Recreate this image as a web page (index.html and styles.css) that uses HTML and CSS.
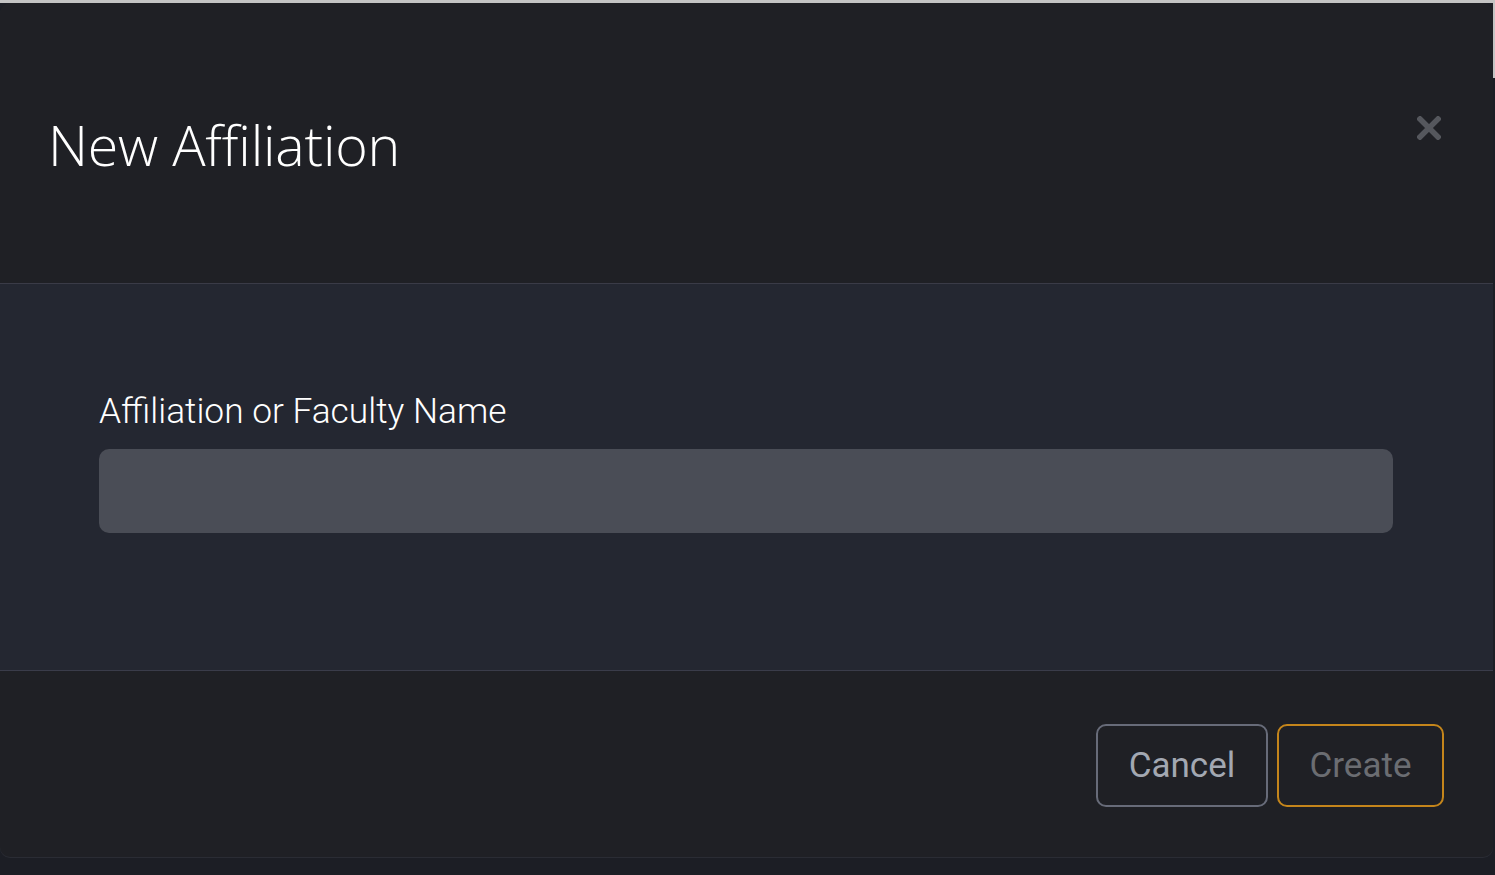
FILE: index.html
```html
<!DOCTYPE html>
<html lang="en">
<head>
<meta charset="utf-8">
<title>New Affiliation</title>
<link rel="stylesheet" href="styles.css">
</head>
<body>
<div class="page">
  <div class="scroll-edge"></div>
  <div class="modal">
    <div class="modal-header">
      <h1 class="modal-title">New Affiliation</h1>
      <button class="close" aria-label="Close">
        <svg width="24" height="24" viewBox="0 0 24 24"><path d="M3 3 L21 21 M21 3 L3 21" stroke="#55575d" stroke-width="5.5" stroke-linecap="square"/></svg>
      </button>
    </div>
    <div class="modal-body">
      <label class="field-label" for="name">Affiliation or Faculty Name</label>
      <input class="field-input" id="name" type="text">
    </div>
    <div class="modal-footer">
      <button class="btn btn-cancel">Cancel</button>
      <button class="btn btn-create">Create</button>
    </div>
  </div>
</div>
</body>
</html>
```

FILE: styles.css
```css
html, body {
  margin: 0;
  padding: 0;
  background: #1c1e25;
  height: 100%;
  overflow: hidden;
}
.page {
  border-top: 3px solid #c4c4c4;
  height: 872px;
  position: relative;
}
.scroll-edge {
  position: absolute;
  right: 0;
  top: -3px;
  width: 2px;
  height: 78px;
  background: #c4c4c4;
}
.modal {
  width: 1493px;
  background: #1f2025;
  border-radius: 10px;
  overflow: hidden;
  display: flex;
  flex-direction: column;
  box-shadow: 0 1px 0 #2a2c34;
}
.modal-header {
  height: 281px;
  box-sizing: border-box;
  padding: 0 50px 0 48px;
  display: flex;
  justify-content: space-between;
  align-items: flex-start;
  border-bottom: 1px solid #3a3b47;
}
.modal-title {
  margin: 0;
  padding-top: 106px;
  font-family: "Open Sans", sans-serif;
  font-weight: 300;
  font-size: 55.5px;
  line-height: 72px;
  color: #ffffff;
  letter-spacing: -0.2px;
}
.close {
  margin-top: 113px;
  margin-right: 2px;
  background: none;
  border: none;
  padding: 0;
  width: 24px;
  height: 24px;
  cursor: pointer;
}
.close svg { display: block; }
.modal-body {
  height: 387px;
  box-sizing: border-box;
  background: #242731;
  padding: 103px 100px 0 99px;
  display: flex;
  flex-direction: column;
  border-bottom: 1px solid #3a3c4a;
}
.field-label {
  font-family: Roboto, sans-serif;
  font-weight: 300;
  font-size: 35.3px;
  line-height: 48px;
  color: #ffffff;
  margin-bottom: 14px;
}
.field-input {
  height: 84px;
  box-sizing: border-box;
  border: none;
  border-radius: 10px;
  background: #4a4d56;
  outline: none;
  width: 100%;
}
.modal-footer {
  height: 186px;
  box-sizing: border-box;
  display: flex;
  justify-content: flex-end;
  align-items: flex-start;
  padding: 53px 49px 0 0;
  gap: 9px;
}
.btn {
  height: 83px;
  box-sizing: border-box;
  background: transparent;
  border-radius: 10px;
  font-family: Roboto, sans-serif;
  font-size: 35px;
  font-weight: 400;
  cursor: pointer;
}
.btn-cancel {
  width: 172px;
  border: 2px solid #676b79;
  color: #a3a8b2;
}
.btn-create {
  width: 167px;
  border: 2px solid #c4851b;
  color: #6b6d72;
}
```
